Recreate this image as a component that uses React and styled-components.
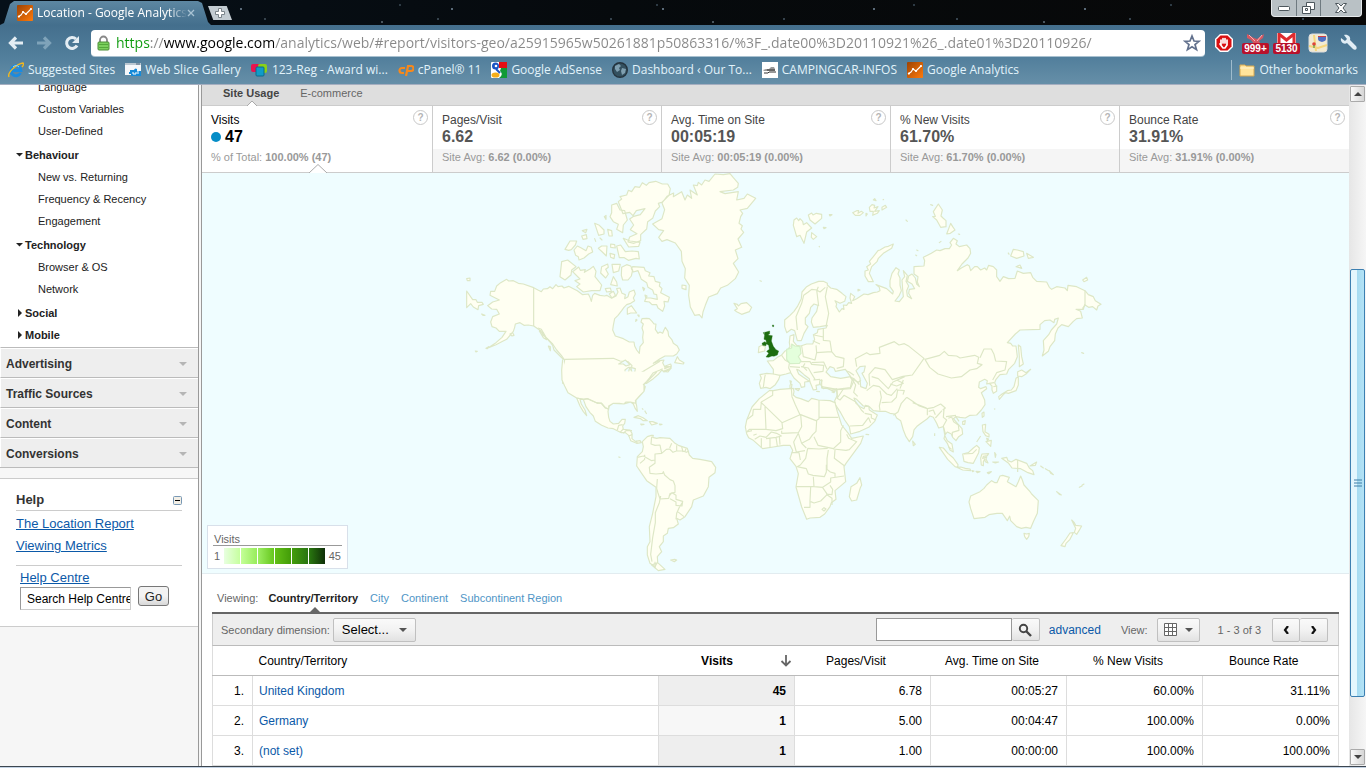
import React from 'react'
import styled, { createGlobalStyle, css } from 'styled-components'

const GlobalStyle = createGlobalStyle`
  * {
    box-sizing: border-box;
  }
  body {
    margin: 0;
    font-family: 'Liberation Sans', Arial, sans-serif;
    font-size: 12px;
    color: #222;
    background: #fff;
  }
  button, input, select {
    font-family: inherit;
    margin: 0;
  }
`

const chromeFont = css`
  font-family: 'Open Sans', 'Noto Sans', sans-serif;
`

const Window = styled.div`
  display: flex;
  flex-direction: column;
  height: 100vh;
  overflow: hidden;
`

/* browser chrome */

const TabStrip = styled.div`
  ${chromeFont}
  flex: 0 0 25px;
  display: flex;
  align-items: flex-start;
  background-color: #04070b;
  background-image:
    radial-gradient(circle at 30px 9px, #5a6a78 0 1px, transparent 1px),
    radial-gradient(circle at 92px 19px, #35424c 0 1px, transparent 1px),
    radial-gradient(circle at 143px 5px, #2d3a44 0 1px, transparent 1px),
    radial-gradient(circle at 51px 22px, #49545d 0 1px, transparent 1px),
    linear-gradient(90deg, #061019, #060a0d 45%, #080808);
  background-size: 211px 25px, 173px 25px, 257px 25px, 331px 25px, auto;
`

const Tab = styled.div`
  display: flex;
  align-items: center;
  width: 211px;
  height: 24px;
  margin-top: 1px;
  padding: 0 16px 0 17px;
  background: linear-gradient(#5d87a2, #446f8d);
  clip-path: polygon(0 100%, 4px 92%, 10px 12%, 14px 0, 198px 0, 202px 8%, 208px 88%, 211px 100%);
`

const TabTitle = styled.span`
  flex: 1;
  margin-left: 4px;
  overflow: hidden;
  white-space: nowrap;
  font-size: 12px;
  line-height: 20px;
  color: #fff;
  mask-image: linear-gradient(90deg, #000 88%, transparent);
`

const IconButton = styled.button`
  display: flex;
  align-items: center;
  justify-content: center;
  padding: 0;
  border: 0;
  background: none;
  color: ${({ $color }) => $color || '#e4edf3'};
`

const NewTab = styled(IconButton)`
  width: 24px;
  height: 14px;
  margin-top: 6px;
  margin-left: -3px;
  background: #c3ccd2;
  clip-path: polygon(0 0, 78% 0, 100% 100%, 22% 100%);
`

const WindowControls = styled.div`
  display: flex;
  margin-left: auto;
  margin-right: 4px;
  height: 17px;
  border: 1px solid #e6eaec;
  border-top: 0;
  border-radius: 0 0 4px 4px;
  background: #b9c1c5;
`

const ControlButton = styled(IconButton)`
  width: ${({ $wide }) => ($wide ? 41 : 24)}px;
  color: #4d575d;

  & + & {
    border-left: 1px solid #6f7a80;
  }
`

const Toolbar = styled.div`
  ${chromeFont}
  flex: 0 0 33px;
  display: flex;
  align-items: center;
  gap: 12px;
  padding: 3px 8px 0 8px;
  background: linear-gradient(#446f8d, #527f9c);
`

const AddressBar = styled.div`
  flex: 1;
  display: flex;
  align-items: center;
  height: 26px;
  margin-left: -1px;
  padding: 0 4px 0 5px;
  border-radius: 4px;
  background: #fff;
  box-shadow: 0 1px 0 #a9c1d0;
`

const AddressInput = styled.input`
  ${chromeFont}
  flex: 1;
  min-width: 0;
  padding: 0;
  margin-left: 5px;
  border: 0;
  outline: 0;
  font-size: 14px;
  line-height: 22px;
  color: transparent;
  background: linear-gradient(90deg, #0c9a0c 0 34px, #888 34px 48px, #000 48px 158px, #888 158px);
  background-clip: text;
`

const Extensions = styled.div`
  display: flex;
  align-items: center;
  gap: 8px;
  margin-left: -3px;
`

const Badges = styled.div`
  display: flex;
  gap: 4px;
`

const Bookmarks = styled.nav`
  ${chromeFont}
  flex: 0 0 27px;
  display: flex;
  align-items: center;
  padding: 0 8px 2px;
  border-bottom: 1px solid #a5aec0;
  background: linear-gradient(#527f9c, #668fa8);
`

const Bookmark = styled.a`
  display: flex;
  align-items: center;
  gap: 4px;
  margin-right: 10px;
  font-size: 12px;
  line-height: 20px;
  white-space: nowrap;
  text-decoration: none;
  color: #e2f3fb;
`

const OtherBookmarks = styled(Bookmark)`
  margin-left: auto;
  margin-right: 0;
  padding-left: 7px;
  border-left: 1px solid #9fbccd;
`

/* page */

const Page = styled.div`
  flex: 1;
  min-height: 0;
  display: flex;
  overflow: hidden;
`

const StatusEdge = styled.div`
  flex: 0 0 2px;
  border-top: 1px solid #3c4650;
  background: #c4d3e4;
`

const Sidebar = styled.aside`
  flex: 0 0 202px;
  overflow: hidden;
  border-right: 4px double #999;
  background: #f6f6f6;
`

const SideNav = styled.ul`
  margin: -9px 0 0;
  padding: 0 0 1px;
  list-style: none;
  background: #fff;
`

const SideItem = styled.li`
  padding-left: ${({ $group }) => ($group ? 16 : 38)}px;
  margin-top: ${({ $spaced }) => ($spaced ? 2 : 0)}px;
  font-size: 11px;
  line-height: 22px;
  font-weight: ${({ $group }) => ($group ? 'bold' : 'normal')};

  a {
    display: flex;
    align-items: center;
    gap: 2px;
    color: #222;
    text-decoration: none;
  }
`

const Accordion = styled.button`
  display: flex;
  justify-content: space-between;
  align-items: center;
  width: 100%;
  height: 30px;
  padding: 2px 11px 0 5px;
  border: 0;
  border-top: 1px solid #bbb;
  border-left: 1px solid #fff;
  background: #eee;
  box-shadow: inset 0 1px 0 #fff;
  font-size: 12px;
  font-weight: bold;
  color: #333;
`

const AccordionEnd = styled.div`
  height: 11px;
  border-top: 1px solid #bbb;
  background: #f7f7f7;
`

const Help = styled.section`
  padding: 11px 16px 16px;
  border-top: 1px solid #ccc;
  border-bottom: 1px solid #ccc;
  background: #fff;
`

const HelpTitle = styled.div`
  display: flex;
  justify-content: space-between;
  align-items: center;
  border-bottom: 1px solid #ccc;

  h2 {
    margin: 0;
    font-size: 13px;
    line-height: 20px;
    color: #333;
  }
`

const HelpLinks = styled.div`
  display: flex;
  flex-direction: column;
  align-items: flex-start;
  padding: 2px 0 8px;
  border-bottom: 1px solid #ccc;
`

const TextLink = styled.a`
  font-size: 13px;
  line-height: ${({ $tall }) => ($tall ? 22 : 16)}px;
  color: #0b59a8;
`

const HelpSearch = styled.form`
  padding: 4px 0 0 4px;
  white-space: nowrap;

  > div {
    display: flex;
    gap: 7px;
  }

  input {
    width: 111px;
    height: 23px;
    margin-top: 1px;
    padding: 0 0 0 6px;
    border: 1px solid #ccc;
    border-top-color: #999;
    border-left-color: #999;
    font-size: 12px;
    color: #000;
  }

  button {
    width: 31px;
    height: 20px;
    padding: 0;
    border: 1px solid #777;
    border-radius: 3px;
    background: linear-gradient(#f3f3f3 50%, #d8d8d8);
    font-size: 13px;
    color: #222;
  }
`

const Main = styled.main`
  flex: 1;
  min-width: 0;
  background: #fff;
`

const ReportTabs = styled.div`
  display: flex;
  align-items: center;
  gap: 21px;
  height: 21px;
  padding: 0 21px 4px;
  border-bottom: 1px solid #ccc;
  background: #dedede;
`

const ReportTab = styled.a`
  position: relative;
  font-size: 11px;
  line-height: 16px;
  font-weight: ${({ $active }) => ($active ? 'bold' : 'normal')};
  color: ${({ $active }) => ($active ? '#444' : '#666')};
  text-decoration: none;

  svg {
    position: absolute;
    left: 24px;
    bottom: -5px;
  }
`

const Cards = styled.div`
  display: grid;
  grid-template-columns: 231fr repeat(4, 229fr);
`

const Card = styled.div`
  position: relative;
  height: 67px;
  padding: 6px 9px 0;
  border-right: 1px solid #ccc;
  border-bottom: 1px solid #ccc;
  color: ${({ $active }) => ($active ? '#000' : '#444')};
  background: ${({ $active }) =>
    $active ? '#fff' : 'linear-gradient(#fff 0 43px, #f5f5f5 43px)'};

  &:last-child {
    border-right: 0;
  }
`

const CardName = styled.div`
  display: flex;
  justify-content: space-between;
  font-size: 12px;
  line-height: 16px;
`

const CardValue = styled.div`
  display: flex;
  align-items: center;
  gap: 4px;
  font-size: 16px;
  line-height: 18px;
  font-weight: bold;
  color: ${({ $active }) => ($active ? '#000' : '#555')};
`

const CardNote = styled.div`
  margin-top: 3px;
  font-size: 11px;
  line-height: 16px;
  color: #999;
`

const Dot = styled.span`
  width: 10px;
  height: 10px;
  border-radius: 50%;
  background: #058dc7;
`

const HelpMark = styled.button`
  width: 15px;
  height: 15px;
  padding: 0;
  margin: -2px -5px 0 0;
  border: 1px solid #c8c8c8;
  border-radius: 50%;
  background: #fff;
  font-size: 10px;
  line-height: 13px;
  font-weight: bold;
  color: #b5b5b5;
`

const CardNotch = styled.svg`
  position: absolute;
  left: 50%;
  bottom: -1px;
  margin-left: -8px;
`

const MapPanel = styled.section`
  position: relative;
  height: 401px;
  border-bottom: 1px solid #e2ecf0;
  background: #effdff;

  > svg {
    display: block;
    width: 100%;
    height: 400px;
  }
`

const Legend = styled.div`
  position: absolute;
  left: 5px;
  bottom: 4px;
  width: 141px;
  padding: 5px 5px 4px;
  border: 1px solid #d8e0ea;
  background: #fff;
  font-size: 11px;
  color: #666;

  h3 {
    margin: 0;
    padding: 2px 1px 0;
    font-size: 11px;
    font-weight: normal;
    line-height: 12px;
    border-bottom: 1px solid #999;
  }

  > div {
    display: flex;
    justify-content: space-between;
    align-items: center;
    margin-top: 2px;
    padding: 0 1px;
  }
`

const Scale = styled.div`
  display: flex;
  gap: 1px;
`

const Swatch = styled.span`
  width: 16px;
  height: 16px;
  background: linear-gradient(90deg, ${({ $from }) => $from}, ${({ $to }) => $to});
`

const Report = styled.section`
  padding: 0 10px;
`

const Viewing = styled.div`
  display: flex;
  align-items: center;
  gap: 12px;
  height: 40px;
  padding: 10px 5px 0;
  border-bottom: 2px solid #666;
  font-size: 11px;
  color: #666;

  > span {
    margin-right: -2px;
  }
`

const ViewingLink = styled.a`
  position: relative;
  line-height: 16px;
  text-decoration: none;
  font-weight: ${({ $active }) => ($active ? 'bold' : 'normal')};
  color: ${({ $active }) => ($active ? '#222' : '#4f95c6')};
  white-space: nowrap;

  svg {
    position: absolute;
    left: 50%;
    bottom: -7px;
    margin-left: -4px;
  }
`

const Filters = styled.div`
  display: flex;
  align-items: center;
  height: 32px;
  padding: 0 10px 0 8px;
  border: 1px solid #ccc;
  border-top: 0;
  border-bottom-color: #bbb;
  background: #eee;
  font-size: 11px;
  color: #666;
  white-space: nowrap;
`

const raised = css`
  height: 24px;
  border: 1px solid #c0c0c0;
  border-radius: 2px;
  background: linear-gradient(#fafafa, #f2f2f2 50%, #e2e2e2);
`

const SelectBox = styled.span`
  display: flex;
  align-items: center;
  margin-left: 3px;

  select {
    ${raised}
    appearance: none;
    width: 83px;
    padding: 0 8px;
    font-size: 13px;
    color: #000;
  }

  svg {
    margin-left: -17px;
    pointer-events: none;
  }
`

const TableSearch = styled.form`
  display: flex;
  margin-left: auto;

  input {
    width: 136px;
    height: 23px;
    padding: 0 4px;
    border: 1px solid #999;
    font-size: 12px;
  }

  button {
    ${raised}
    height: 23px;
    display: flex;
    align-items: center;
    justify-content: center;
    width: 28px;
    padding: 0;
    border-left: 0;
  }
`

const Advanced = styled.a`
  margin: 0 20px 0 9px;
  font-size: 12px;
  color: #0b59a8;
  text-decoration: none;
`

const ViewButton = styled.button`
  ${raised}
  display: flex;
  align-items: center;
  justify-content: center;
  gap: 8px;
  width: 43px;
  padding: 0;
  margin: 0 18px 0 9px;
`

const Pager = styled.div`
  display: flex;
  margin-left: 11px;

  button {
    ${raised}
    display: flex;
    align-items: center;
    justify-content: center;
    width: 28px;
    padding: 0;
  }

  button + button {
    border-left: 0;
  }
`

const Table = styled.table`
  width: 100%;
  table-layout: fixed;
  border-collapse: collapse;
  border-right: 1px solid #ddd;
  font-size: 12px;
  color: #000;

  th, td {
    height: 30px;
    padding: 2px 8px 0 6px;
    border-left: 1px solid #ddd;
    border-bottom: 1px solid #ddd;
    text-align: right;
    font-weight: normal;
  }

  th {
    height: 29px;
    padding: 1px 13px 0 0;
    border-left: 0;
    border-bottom-color: #bbb;
    text-align: center;
  }

  th:first-child {
    border-left: 1px solid #ddd;
  }
`

const NameHead = styled.th`
  && {
    padding-left: 6px;
    text-align: left;
  }
`

const SortedHead = styled.th`
  && {
    padding-right: 3px;
    font-weight: bold;
  }

  > span {
    display: flex;
    align-items: center;
    justify-content: center;
    gap: 4px;
  }

  > span > span {
    flex: 1;
  }
`

const NameCell = styled.td`
  && {
    text-align: left;
  }

  a {
    color: #0b59a8;
    text-decoration: none;
  }
`

const SortedCell = styled.td`
  && {
    font-weight: bold;
    background: ${({ $odd }) => ($odd ? '#eee' : '#f7f7f7')};
  }
`

const Scrollbar = styled.div`
  flex: 0 0 17px;
  display: flex;
  flex-direction: column;
  align-items: stretch;
  padding: 1px 1px;
  background: linear-gradient(90deg, #e6e6e6, #f6f6f6);
`

const ScrollButton = styled(IconButton)`
  height: 16px;
  border: 1px solid #aaa;
  border-radius: 1px;
  background: linear-gradient(90deg, #fafafa, #d6d6d6);
  color: #444;
`

const Track = styled.div`
  flex: ${({ $grow }) => $grow} 0 0;
`

const Thumb = styled.div`
  flex: 427 0 0;
  display: flex;
  align-items: center;
  justify-content: center;
  border: 1px solid #3c7fb1;
  border-radius: 2px;
  background: linear-gradient(90deg, #e3f6fd 0 45%, #a6dbf1 50%, #b4e3f6);
`

/* icons */

const Caret = ({ color = '#555', size = 8 }) => (
  <svg width={size} height={size / 2} viewBox="0 0 8 4">
    <path d="M0 0h8L4 4z" fill={color} />
  </svg>
)

const CaretRight = () => (
  <svg width="7" height="8" viewBox="0 0 7 8">
    <path d="M2 0l4 4-4 4z" fill="#222" />
  </svg>
)

const AnalyticsIcon = () => (
  <svg width="16" height="16" viewBox="0 0 16 16">
    <defs>
      <linearGradient id="ga" x2="1" y2="1">
        <stop stopColor="#9c4304" />
        <stop offset="1" stopColor="#ff7a0a" />
      </linearGradient>
    </defs>
    <rect width="16" height="16" rx="1" fill="url(#ga)" />
    <path d="M1 12l3-2 2-3 3 2 2-2 3-3" fill="none" stroke="#fff" strokeWidth="1.1" />
    <g fill="#fff">
      <circle cx="2" cy="11.500" r="1.1" />
      <circle cx="6" cy="7" r="1.1" />
      <circle cx="9" cy="9" r="1.1" />
      <circle cx="14" cy="4" r="1.1" />
    </g>
  </svg>
)

const IeIcon = () => (
  <svg width="16" height="16" viewBox="0 0 16 16">
    <path d="M12.500 11A5 5 0 1 1 13 8.500H4" fill="none" stroke="#1b8be0" strokeWidth="2.800" />
    <path d="M1 15C-1 11 8 2 15 1c1 1 0 3-1 4" fill="none" stroke="#f2b81d" strokeWidth="1.400" />
    <path d="M5 5a4 4 0 0 1 6 0" fill="none" stroke="#8ed5ff" strokeWidth="1" />
  </svg>
)

const SliceIcon = () => (
  <svg width="16" height="14" viewBox="0 0 16 14">
    <rect width="16" height="12" fill="#f5f8fb" />
    <path d="M0 1h16" stroke="#bac7d1" strokeWidth="2" />
    <path d="M11 1h4" stroke="#46637c" strokeWidth="1" />
    <path d="M5 7h4a2 2 0 0 1 3-1v2h4v5H6v-2H4V9h1z" fill="#168ad8" />
    <path d="M8 9v2h3V9M13 8v3" fill="none" stroke="#fff" />
  </svg>
)

const RegIcon = () => (
  <svg width="17" height="14" viewBox="0 0 17 14">
    <rect x="0" y="1" width="9" height="8" rx="2" fill="#e9134e" />
    <rect x="7" y="1" width="9" height="9" rx="2" fill="#8bd018" />
    <rect x="5" y="4" width="8" height="9" rx="1" fill="#109cc9" stroke="#0a6a8c" />
  </svg>
)

const CpIcon = () => (
  <svg width="16" height="14" viewBox="0 0 16 14">
    <path
      d="M7 5H4a2 2 0 0 0 0 5h2M8 13l2-10h3a2 2 0 0 1 0 5h-3"
      fill="none"
      stroke="#f7891c"
      strokeWidth="2.200"
    />
  </svg>
)

const AdSenseIcon = () => (
  <svg width="16" height="16" viewBox="0 0 16 16">
    <rect width="16" height="16" rx="1" fill="#fff" />
    <path d="M8 0h8v6H8z" fill="#e60f14" />
    <path d="M10 6h6v10H8c4-3 3-5 1-7z" fill="#109a35" />
    <circle cx="4.500" cy="4" r="3.500" fill="#1b55c4" />
    <circle cx="5" cy="4" r="1.300" fill="#fff" />
    <ellipse cx="4.500" cy="13" rx="4" ry="2.600" fill="#f5ae19" />
    <path d="M5 7l4 4" stroke="#1b55c4" strokeWidth="2" />
  </svg>
)

const GlobeIcon = () => (
  <svg width="16" height="16" viewBox="0 0 16 16">
    <circle cx="8" cy="8" r="7.300" fill="#33505f" stroke="#25343e" strokeWidth="1.400" />
    <path d="M3 4l4-2 2 2-2 2 1 2-3 2-2-3zM10 6l4 1-1 4-3 2-1-4z" fill="#7f9fb0" />
  </svg>
)

const CampIcon = () => (
  <svg width="16" height="16" viewBox="0 0 16 16">
    <rect width="16" height="16" fill="#fff" />
    <path d="M1 8l3-1h3l2-2h3l1 2v2H2z" fill="#999" />
    <path d="M5 8h8M2 11h4l1-1h7" fill="none" stroke="#333" />
  </svg>
)

const FolderIcon = () => (
  <svg width="16" height="14" viewBox="0 0 16 14">
    <path d="M1 2h5l1 1h8v10H1z" fill="#ffe49b" stroke="#d6a850" />
    <path d="M1 5h14" stroke="#fff4cf" />
  </svg>
)

const BackIcon = ({ flip }) => (
  <svg width="16" height="14" viewBox="0 0 16 14">
    <path
      d={flip ? 'M1 7h12M8 1.500L13.500 7 8 12.500' : 'M15 7H3M8 1.500L2.500 7 8 12.500'}
      fill="none"
      stroke="currentColor"
      strokeWidth="3.200"
    />
  </svg>
)

const ReloadIcon = () => (
  <svg width="16" height="16" viewBox="0 0 16 16">
    <path d="M13 10.500A5.500 5.500 0 1 1 12 4" fill="none" stroke="currentColor" strokeWidth="3" />
    <path d="M15 1v7H8z" fill="currentColor" />
  </svg>
)

const LockIcon = () => (
  <svg width="15" height="16" viewBox="0 0 15 16">
    <path d="M4 8V5a3.500 3.500 0 0 1 7 0v3" fill="none" stroke="#888" strokeWidth="1.800" />
    <rect x="2" y="7" width="11" height="8" rx="1" fill="#7bd05d" stroke="#4b8d36" />
    <path d="M3 9.500h9M3 12.500h9" stroke="#54a83b" />
  </svg>
)

const StarIcon = () => (
  <svg width="18" height="18" viewBox="0 0 18 18">
    <path
      d="M9 2l2 5 5 .3-4 3.300 1.500 5L9 12.800 4.500 15.600l1.500-5-4-3.300L7 7z"
      fill="#fff"
      stroke="#62718d"
      strokeWidth="1.700"
    />
  </svg>
)

const StopHandIcon = () => (
  <svg width="20" height="20" viewBox="0 0 20 20">
    <path d="M6 1h8l5 5v8l-5 5H6l-5-5V6z" fill="#fff" />
    <path d="M6.500 2.500h7l4 4v7l-4 4h-7l-4-4v-7z" fill="#d90f12" />
    <path
      d="M7 7v5M9 5.500V10M11 5.500V10M13 7v5l-2 3H9l-3-4"
      fill="none"
      stroke="#fff"
      strokeWidth="1.700"
      strokeLinecap="round"
    />
  </svg>
)

const BadgeBox = styled.span`
  display: flex;
  flex-direction: column;
  align-items: center;
  width: 27px;

  b {
    align-self: stretch;
    margin-top: -1px;
    border-radius: 2px;
    background: #b8112b;
    font-family: 'Liberation Sans', Arial, sans-serif;
    font-size: 10px;
    line-height: 11px;
    text-align: center;
    color: #fff;
  }
`

const BirdIcon = () => (
  <svg width="20" height="11" viewBox="0 0 20 11">
    <path d="M1 1l7 4 3 1 7-5-1 4-4 3 2 3H8L5 7 1 5z" fill="#d75761" />
    <path d="M3 2l6 6M16 2l-5 6" stroke="#f7b0b5" />
  </svg>
)

const MailIcon = () => (
  <svg width="19" height="11" viewBox="0 0 19 11">
    <rect width="19" height="11" fill="#fff" />
    <path d="M2 11V1l7.500 6L17 1v10" fill="none" stroke="#df2b2e" strokeWidth="3" />
  </svg>
)

const MapsIcon = () => (
  <svg width="20" height="20" viewBox="0 0 20 20">
    <rect x="1" y="1" width="18" height="18" rx="3" fill="#f1ead2" stroke="#ddd" />
    <path d="M1 13l9 2 9-3M6 2l2 16" stroke="#f6d67c" strokeWidth="2" fill="none" />
    <path d="M10 3h8v3c0 2-2 2-4 3-2-1-4-1-4-3z" fill="#5271c4" />
    <path d="M10 3h8v1h-8z" fill="#cf3f44" />
    <circle cx="6" cy="11" r="1.800" fill="#e0443a" />
    <path d="M6 12v3" stroke="#3b8e3b" />
  </svg>
)

const WrenchIcon = () => (
  <svg width="18" height="18" viewBox="0 0 18 18">
    <path
      d="M1 4l4 3 2-2-3-4c4-1 7 2 6 5l6 6c2 3-1 5-3 3L7 9C4 11 0 8 1 4z"
      fill="#e1edf5"
    />
  </svg>
)

const SearchIcon = () => (
  <svg width="14" height="14" viewBox="0 0 14 14">
    <circle cx="5.500" cy="5.500" r="3.700" fill="none" stroke="#444" strokeWidth="1.900" />
    <path d="M8 8l5 5" stroke="#444" strokeWidth="2.400" />
  </svg>
)

const GridIcon = () => (
  <svg width="13" height="13" viewBox="0 0 13 13">
    <path
      d="M.5.500h12v12H.5zM4.500.500v12M8.500.500v12M.5 4.500h12M.5 8.500h12"
      fill="#fff"
      stroke="#666"
    />
  </svg>
)

const Chevron = ({ d }) => (
  <svg width="6" height="8" viewBox="0 0 6 8">
    <path d={d} fill="none" stroke="#111" strokeWidth="2.200" />
  </svg>
)

const SortArrow = () => (
  <svg width="12" height="12" viewBox="0 0 12 12">
    <path d="M6 0v10M1.500 6L6 10.500 10.500 6" fill="none" stroke="#666" strokeWidth="1.800" />
  </svg>
)

/* world map, drawn in four regions at three units per pixel */

const REGIONS = [
  {
    origin: [258, -3],
    land: `M140 328L146 333 160 332 175 340 190 342 221 353 234 360 244 365 250 357 262 356 270 350 278 356 288 344 294 350 306 348 312 354 326 349 340 356 352 362 368 374 385 372 390 382 394 394 398 376 404 370 420 376 434 378 440 376 455 385 468 378 474 366 470 356 480 354 486 370 496 374 494 386 504 380 508 366 522 360 526 372 520 384 524 392 512 400 500 404 492 412 485 422 474 436 464 446 460 466 458 480 466 498 490 506 508 516 522 516 524 528 530 540 538 550 540 530 550 518 548 502 550 486 546 474 550 462 543 456 546 446 560 445 568 446 576 454 582 462 588 462 586 478 594 490 600 486 608 490 612 480 616 472 624 484 626 498 636 510 640 520 652 528 658 540 650 552 640 558 615 558 600 566 580 580 600 572 612 570 608 578 614 590 634 590 626 600 612 606 606 600 596 612 580 626 560 640H308L308 600 314 570 304 556 290 540 278 522 262 506 250 496 242 482 230 474 221 468 205 465 192 466 180 458 166 462 164 472 160 484 150 496 140 508 128 514 108 524 84 534 108 518 126 502 138 484 118 484 108 474 96 470 92 456 98 440 118 432 110 418 95 417 83 407 98 396 118 390 106 384 90 376 92 364 104 364 110 348 122 338z
M640 80l25-15 10 25 7-15 13 10-5-25 22 15-12-30 12 2 3-10 10 8 10-15 12 4 18-22 25 2 20-3 10 12 15 17-2 12-13 8-40 5 15 6 40-6-5 25 22-5 10-13 25 13-25 30-22 5 8 10-6 10-5 20 10 7-4 10 8 10-17 20 11 25-19 8 8 26-14 14 16 26-10 20-24 20-20 8-10 17-26 10-10 25-7 20-3 18-8-10-14 2-13-25-5-35 2-30-14-22 2-28-10-22-2-30-18-25-25-10-15 5-10-12 15-20-15-3-18-17 28-16 8-27-8-20 15-20 20-10z
M822 400l10 3 3 5 8-7 17-3 15 14-7 13-23 8-15-8-6-4 8-5z
M475 95l10-8-5-7 20-5 5-14 10 4 10-15 14 2 8-14 12 8 8-8 20-4 20 8 16 0 8 14-4 20-20 20-12 4 4 10-13 13-8 22-15 10-3 22-18 17 0 18-20 8-18-4 5-15 22-10-20-12 10-14-12-18 12-8 20-5 14-18-26 6-10 15-10-10-20 4z
M455 105l15-5 10 20 14 2 8 28-12 15-2 23-18-10 5-15-15-8-10-15 5-12z
M470 228l12-3 14 20 20-2 19 2 3 22-10-2-23 6-12-8-15 0zM490 205l20 8 30 4-4 12-30 2z
M452 222l12 2 2 10-14-2zM450 250l14 4-2 12-10-4zM415 235l10-7 16 0-2 30-12-12zM443 178l12 4 2 16-10 0zM404 160l14 6 14 14 0 12-16 4zM365 198l14-4 2 12-12 2zM367 182l14-4-4 10zM433 140l5-4 0 12zM404 206l3 8zM420 204l6 6z
M315 238l15-25 20 0-4 12-12 14-8 2zM342 240l10-12 12 6 14 8 6-14 10 4 4 14-12 6-14 12-15 6-2-10-8-4z
M305 275l18-5 25 20-13 10-2 15-18 15-15-10z
M338 305l18-14 5 10 15-2-3 8 17-10 10-8 8 15-3 16 20 25-5 17-25 0-25 4-20-16 10-8-15-10 15-5z
M425 290l18-8 2 10-8 6 8 14-8 12-15-15zM456 283l25 0-5 20-16 5zM460 320l10 16 2 12-20-4zM436 356l15-2 3 10-14 2zM448 372l12-8 6 12-10 8z
M485 292l15-8 12 4 6 12-4 18-10 12-16 0-4-14zM518 290l34 2 4 10 14 6-4 10 16 2 4 14 14 4-2 10 8 8-4 12 26 14-4 14-12-2 2 14-6 16-14-10-4-10-14 0-8-8-14-2 4-10 14 0 20 4-2-14-8-2-4-12-14-8-4-14-16-10-6-16-4-10-14 4-6-10zM502 415l12-8 16 22-18 0-10 4zM533 435l4 0 0 5zM528 448l3 2-4 4zM548 352l6 4-3 6zM555 375l6 3-3 8z
M644 578l8-18 6 10 14 8-2 4zM616 588l16-6 2 6-20 8zM610 604l24-10-10 12zM666 345l12 2 0 12-12-4z
M20 363l18 26 10 0 4 8 14 0 4 6-14 4-2 12-14-8-8-10-12 12zM20 326l10-2 0 8-8 0zM65 432l10 4-6 0zM78 535l8-5-4 6zM46 543l6 1-4 2zM238 483l10 4 12 22-10-6zM265 528l6 2 0 12zM150 492l8-4 4 8-6 2z`,
    borders: `M221 353v115M234 474l10 4 14 24 12 14 8 10 4 14 24 24 9 6M315 568l145-3 20 8 24 2 12 12-4 14M540 610l60-36`,
    lakes: `M476 582l20-12 14 14-12 4-8-6zM495 618l0-18 10-8 4 0-6 26zM512 592l14 4-2 12-8 0zM520 624l18-10-4 10zM538 612l14-6-4 8z`,
  },
  {
    origin: [358, 207],
    open: true,
    land: `M8-62L5-30 6 0 14 18 24 38 50 54M50 54L60 78 70 95 80 107 75 90 64 72 60 58 70 58 78 80 90 98 100 108 106 124 125 136 144 144 160 146 172 152 184 158 196 158 206 166 212 182 230 190 244 188 240 182 226 184 216 176 216 160 210 150 190 148 188 138 194 130 196 118 186 118 176 130 160 132 150 124 146 112 144 94 148 78 160 70 178 70 192 72 198 66 212 66 220 72 226 86 232 94 230 78 226 62 240 46 252 34 256 20 250 14 260 4 268-6 280-22 300-30 308-34M5-30L6 0 14 18 24 38 50 54 72 58 84 56 110 68 124 70 136 84 146 88 146 78 160 70 192 72 212 66 228 70 228 60 252 34 252 14 266 0 290-24`,
    islands: `M247 185l15-15 12-4 6 0-2 6 12 3 10-2 30 2 15 15 10 6 27 9 6 20 10 10 22 3 20 4 15 3 12 17-2 16-18 14-2 28-15 28-30 12-5 20-20 30-15 10-10-5 5 17-15 11-15 2-3 15-12 8 0 17-12 15 7 15-13 15 1 15-8 15-15-10-8-25 0-25 8-15-2-45 10-40 10-50 0-28-28-20-15-22-15-22 2-28 15-15 3-15z
M293 548l22 20-20 4-20-17zM332 540l12-2 6 2-7 5zM222 112l13-5 14 6 13 9-12 0-8-6zM268 125l10 0 14 5-17 5zM298 132l8 1-6 2zM242 132l10 1-8 2zM246 85l4 4M254 92l6 10M176 231l4 1z`,
    borders: `M50 54l20 4 12-2 30 14 12-1 12 14 10 4M172 150l4-14 12-2M180 157l10-10M190 160l8-8 18 0M205 168l12-4M228 182l4 8M275 170l-2 22 12 4 15-1 5 25-20 2 0 18-10 2-25-14-18 4M240 250l14-12 0-14M285 240l0 10-17 12 2 18 18 2 20-2 2-5 4 10 16 14 10 4 5 14 0 20-15 4-4 14-26 2-6-18-4-14 2-28M326 350l10-12 12 8 0 12 20 6-2 14-18-2 0-10-18-10M352 394l20 16M368 366l-10 16-8 18-2 18M302 348l-4 20-12 30 0 30-8 45-6 50 4 22M305 220l14-12 10-1 10 10 10-4 20 0 10 4 8-4M335 190l-6 14M350 196l0 18M365 200l4 16M378 206l-4 10M285 545v20`,
  },
  {
    origin: [538, -3],
    land: `M262 345L272 354 290 358 306 370 318 380 314 394 300 400 285 392 290 402 288 410 298 426 306 416 312 418 310 405 320 406 326 398 335 400 330 384 332 370 344 380 338 392 350 386 372 372 384 374 400 368 412 366 420 362 418 352 408 344 424 350 440 356 458 372 460 364 450 350 450 332 456 310 468 293 478 300 474 312 480 324 480 345 484 362 478 376 465 393 478 395 490 380 488 358 486 330 494 320 490 302 502 316 498 334 506 348 500 362 502 378 515 386 506 370 508 358 524 356 516 342 502 334 506 318 516 312 526 324 530 342 538 350 532 336 534 320 522 312 522 290 552 288 554 272 550 262 574 250 590 240 600 242 615 236 628 236 635 225 630 218 640 205 652 212 648 222 658 230 680 225 690 236 692 250 684 264 666 282 652 302 664 294 682 284 688 288 692 302 704 290 712 290 722 300 734 294 740 300 746 286 760 290 770 300 770 320 780 334 790 320 806 326 825 325 832 303 850 310 872 308 878 322 890 334 920 336 928 352 935 358 950 350 975 354 982 362 984 346 1010 350 1035 362 1045 374 1060 380 1066 392 1083 403 1074 408 1070 420 1058 410 1046 412 1034 404 1030 418 1008 418 1022 424 1027 444 1010 446 1000 454 985 470 965 464 954 474 946 492 944 512 930 530 925 544 907 558 912 540 910 512 926 494 934 480 950 462 955 444 944 448 942 458 930 450 914 452 900 464 900 478 840 480 826 492 802 518 812 520 818 528 828 528 832 560 824 580 806 598 800 612 780 614 768 628 764 638 770 650 770 664 760 670 756 660 756 648 748 640 740 642 742 632 734 628 718 636 716 652 722 656 738 650 740 656 724 668 734 690 735 704 724 720 710 735 690 736 676 744 660 742 648 740 640 746 652 760 666 776 668 792 656 800 648 812 638 802 634 792 622 786 614 796 622 812 636 822 640 846 630 840 622 820 612 806 616 790 610 770 596 774 590 760 580 742 570 738 560 748 545 758 532 768 522 780 518 800 508 815 498 800 490 780 482 752 470 744 464 732 450 730 436 724 420 724 400 722 388 710 370 708 350 688 342 684 348 700 360 710 372 716 376 706 386 708 388 720 412 735 404 754 386 772 360 784 332 792 328 770 314 750 302 728 286 704 284 692 292 676 290 656 276 662 260 654 250 656 242 644 246 632 240 630 238 644 228 646 230 658 220 660 210 636 208 626 192 614 176 600 170 598 176 612 190 622 208 634 194 636 194 650 184 652 180 640 162 624 152 608 138 612 120 616 116 628 106 644 90 656 78 652 62 655 58 640 64 624 60 614 80 610 100 612 100 598 82 573 100 572 112 562 124 556 134 544 142 540 150 530 148 518 150 498 162 494 160 514 170 526 182 528 200 522 218 522 224 508 220 494 232 488 234 478 258 474 262 466 240 470 220 472 214 456 216 444 230 424 234 406 222 402 212 412 208 430 196 444 196 462 204 470 192 490 184 512 172 512 164 482 154 478 140 488 134 470 134 450 150 436 162 424 172 410 184 386 186 366 200 350 214 342 236 334 250 334 262 340z
M57 530l9-4 10 4-2 13-19 5z
M162 150l8-6 6 8 4-6 8 8 2 10 10-6 15 16-15 12-8 34-12-24-10 4-7-24-3-10z
M205 135l10-6 4 6 10-5 16 3 0 12-20 17-15-12zM215 188l15 12-10 8-6-6zM268 134l8 0-6 4zM250 172l8 1-6 3zM237 228l2 4M338 128l12-6 6 0-2 8 10-6 6 4-10 8-14 0zM388 112l8-8 8 2-2 8 12-4-10 14 14-2-6 8-14 6 2-12-10 0zM400 90l4-4 4 6zM426 112l10-6 4 6-14 8zM428 90l4-2M378 130l4 2-4 6zM498 150l4 4zM572 104l6 2z
M460 222l-5 13-25 15-15 15-4 10-16 15-7 20 12 25-15 0-10-17 0-15 10-3-5-10 12-8-4-8 12-14 14-18 6-2 15-9 10-2z
M580 125l15-23 12 18-4 18 6 6 9 8 0 18-16 2-12-22-12-10 8-1zM620 192l12-32 6 10 7 10-14 10zM598 218l5-4zM655 192l4 1zM530 240l4 2zM527 255l3 2zM354 358l6 2-6 3z
M812 258l8-20 12 2 18 5 2 13-22 7zM860 250l20 12-15 3zM828 290l12-5 5 10zM804 248l4 6M1028 330l12-8 3 8-11 5zM1025 548l6 2z
M835 525l7 5 3 30 5 22-12 8 0-30zM833 605l12-5 13 8 14-10-14 14-13 8-12-2zM60 332l4 2zM150 632l4 2-2 8zM150 645l6-2-2 12-4 0zM165 656l14 0-4 6z`,
    borders: `M172 480l-4-40 17-40 6-24 14-10 10-8 16 2 4-10M236 408l-6-48 10 6 16-14M262 350l-6 30 10 50-8 40M222 495l28 6M218 512l22 10M250 475l0 36 20 2 5 32M185 528l5 32 35 10 5-22-2-22M230 548l45-3 12 14 25 6-2 25-20 5M215 578l36-2 10 22M180 575l30 0 5 8 36 3-2 18-28 4M183 590l22 4 8 14 12 20M195 580l-6 10 12 12M125 556l10 14 14 8M148 580l-2 14 6 12M150 590l30 2M76 614l-2 8-4 30M100 612l20 4M245 628l0 26 46 5 40-3 10-22-10-12M220 630l20-2M312 600l16 6 14 10M330 620l12 6 16 18M350 590l-4-24 34-18 10 6 30-4-2-18 45-17 14 10 16-4 14 8 45 36-35 50-28 4-32 10-22-30-30-6-18 20 2 34M395 620l20 6 30 30 14-20 35-16M480 656l10-26M555 568l44-12 14-12 12 12 25 2 10 6 44-8 12 6-4 18 14 4-16 12-20 4-26 20-30 4-40-12-25-20zM720 563l12-26 22 0 8 16 5 20 33 2-5 25-25 8-12 22M1035 362v44l-8 10`,
    lakes: `M258 606l12-16 12 4 4 10 30-6 16 22-30 5-30-5zM348 602l12-12 16-2-4 18-6 4 16 30-4 16-16-6-2-26z`,
    germany: 'M140 538l15-4 0-12 10 6 15 2 3 20-8 10 8 13-5 7-28 1-10-13z',
    uk: 'M75 487l14-4 0 8-5 4 13 2-3 16 6 16 8 10 8 4-4 12-10 4-6-1-10 4-8-1 8-11-6-6 8-6-2-12-6-4-2-12-6-2zM66 520l8-5 6 4-2 8-10-1zM97 465l4 0 0 5-3 0zM70 488l3-2 0 8z',
  },
  {
    origin: [538, 197],
    land: `M88 62l12 0 20-4 40-3 2 10-2 10 8 7 14 4 23 9 10-10 20 5 35 2 15 6 7 27 13 40 20 25 10 15 35-7-8 22-22 30-22 30-6 10 5 45-14 12-18 15 3 26-14 10-4 12-16 22-14 10-30 2-10 4-15-37-17-60 7-40-7-22-18-23 8-25-8-15-20 0-30 5-32 5-28-25-14-8-6-12-4-20 4-20 16-40 22-25z
M360 323l5 22-4 8-11 37-15 3-7-13 5-30 17-10z
M692 378l28-13 12-10 8-10 15-13 10 6 6 0 9-20 8-2 20 6-6 13 26 15 7-15 7-17 5 12 5 15 18 20 5 7 20 20-3 38-12 25-8 20-14-3-14 3-14-5-18-18-3-14-7 14-15-22-16 0-24 4-12 8-33 4-10-30-5-20z
M852 490l8 2 8-2-2 10-6 8-6-8zM995 450l8 8 4 8 18 2-8 14-7 11-7-6 4-12zM1000 488l-10 20-12 12-3 10-12-3 15-20 12-18z
M598 232l12 2 14 16 16 14 14 20-1 8-8-2-22-22-14-20zM650 292l12-1 14 4 14 2 2 5-24-2zM668 252l17-4 15-14 10-8 8 8-2 14-6 12-10 20-16-2-12-4zM722 264l4-12 20-1-4 6-12 2-2 6 12-4-2 6 6 12-8-4-2-8-4 8 0 12-6-2zM696 302l6 1-4 2zM708 304l12 1-8 3zM742 308l12-3-8 6zM764 248l4 6-2 8zM758 276l18 0-10 3zM785 265l15-3 4 10 10 4 14-8 32 12 8 14 10 8 4 12-18-6-22-12-26-2-10-14zM870 288l16-10 4-2-4 10zM902 288l8 6zM916 296l10 6zM928 302l12 12-8-4zM950 365l14 10-6-2zM1018 352l8-4zM1026 346l6-4z
M727 165l10-2-2 22 12 8 0 8-10-4-8-12zM738 215l16-4-2 18-6-6zM722 198l-12 18M740 205l6 2-4 4zM518 213l8 10-6 4zM726 130l6-4 0 12-5 4zM668 155l8-3-2 11-6 0zM828 25l7-5 0 25-7 17-23 8-8-2-7 6-12 14-2-8 10-8 16-10 12-2 8-10zM762 118l4-2M584 190l0 8M378 193l8 1zM276 66l10-4-4 6zM230 64l8 1z`,
    borders: `M98 62l0 14-34 20-2 22-22 0-2 18-16 12M62 96l64 62 54-24-14-30-10-24-2-24M75 110l3 68-50 0-8 8M78 178l30 4 20-6-2-18M125 182l0 8 50-2 10-18-3-36 46 18 9-6 0-56M237 142h58M230 152l-2 32-10 10-10 14-23 12-10-30M222 200l12 26 46 10 22-20 0-34 8-16M280 237l38 4 10-2 22-24-24-10-6-12M285 240l-2 25 30 22M265 240l-4 26 0 32 10 8 14 4 0 10M203 235l34 2 26-2M203 235l-6 30-16 20-10 5 28 6 6 16 14 4 34 4 6-14 0-22M220 320l2 30-54 0M222 350l26 2 24-16 0-12 40-6M212 352l-2 40 0 20-18 0M212 395l10 4 20-6 20-20-14-20M258 372l18 2 2-16-8-12M262 375l14 10 0 20M246 418l6-5 6 4-6 6zM185 220l14 14M175 190l-14 26 8 30 26-4M155 248l22 0 4 22M64 205l0 28M90 205l0 26M108 202l4 26M118 198l2 26M44 208l16-10 18 4 16-16 16 4 14 8-16 4-30 4M20 186l16-4M40 196l10-4M245 50l46 8 40-5 6-26 18 10 8-6M290 58l2 26 20-30M290 84l10 6 12-14 36 20 16 24 8 8M335 25l12 20-6 22 12 12M380 62l20-16 18 4 22 22 14 4 18-20M420 122l-2-14 6-26-4-20M425 98l30-2 14-14 4-22 20 2-4 12M500 82l-16 18-10 26-14 10M500 82l18 12 20 14 24 8 20-4 20-10 14 12-8 6M518 98l42 16M562 116l0 20M566 124l14-4 6 14M606 122l-20 22M612 118l-2 24 10 8-10 18 4 26M625 145l10-4 6 14 14 10 2 16-20 6 0 12M618 140l30-4M645 136l12 18M330 168l38-2 18-24M374 130l20 4 0 10 14 6M386 144l6 14M625 230l10 8M672 252l26-2 12-12M833 270v36M470 30l20 10-20 8-20-6M748 40l14-2M760 50l12-2`,
  },
]

const WorldMap = () => (
  <svg viewBox="0 0 1147 400" role="img" aria-label="Visits by country">
    {REGIONS.map(({ origin, land, islands, borders, lakes, germany, uk }) => (
      <g
        key={origin.join()}
        transform={`translate(${origin.join(' ')}) scale(0.33333)`}
        stroke="#dde7c6"
        strokeWidth="3.500"
        strokeLinejoin="round"
      >
        <path d={land} fill="#fffff2" />
        {islands && <path d={islands} fill="#fffff2" />}
        <path d={borders} fill="none" />
        {lakes && <path d={lakes} fill="#effdff" />}
        {germany && <path d={germany} fill="#e4ffdc" stroke="#d5efc8" />}
        {uk && <path d={uk} fill="#1d6d10" stroke="#1d6d10" strokeWidth="1" />}
      </g>
    ))}
  </svg>
)

/* data */

const BOOKMARKS = [
  [IeIcon, 'Suggested Sites'],
  [SliceIcon, 'Web Slice Gallery'],
  [RegIcon, '123-Reg - Award wi...'],
  [CpIcon, 'cPanel® 11'],
  [AdSenseIcon, 'Google AdSense'],
  [GlobeIcon, 'Dashboard ‹ Our To...'],
  [CampIcon, 'CAMPINGCAR-INFOS'],
  [AnalyticsIcon, 'Google Analytics'],
]

const NAV = [
  { label: 'Language' },
  { label: 'Custom Variables' },
  { label: 'User-Defined' },
  { label: 'Behaviour', group: true, open: true, spaced: true },
  { label: 'New vs. Returning' },
  { label: 'Frequency & Recency' },
  { label: 'Engagement' },
  { label: 'Technology', group: true, open: true, spaced: true },
  { label: 'Browser & OS' },
  { label: 'Network' },
  { label: 'Social', group: true, spaced: true },
  { label: 'Mobile', group: true },
]

const METRICS = [
  { name: 'Visits', value: '47', note: '% of Total: ', bold: '100.00% (47)', active: true },
  { name: 'Pages/Visit', value: '6.62', note: 'Site Avg: ', bold: '6.62 (0.00%)' },
  { name: 'Avg. Time on Site', value: '00:05:19', note: 'Site Avg: ', bold: '00:05:19 (0.00%)' },
  { name: '% New Visits', value: '61.70%', note: 'Site Avg: ', bold: '61.70% (0.00%)' },
  { name: 'Bounce Rate', value: '31.91%', note: 'Site Avg: ', bold: '31.91% (0.00%)' },
]

const SCALE = [
  ['#e8ffe0', '#c6ff9f'],
  ['#c4ff98', '#98ec5c'],
  ['#9cee62', '#66c71d'],
  ['#62bf17', '#429c08'],
  ['#439d0c', '#297512'],
  ['#29780f', '#0f2f08'],
]

const ROWS = [
  ['United Kingdom', '45', '6.78', '00:05:27', '60.00%', '31.11%'],
  ['Germany', '1', '5.00', '00:04:47', '100.00%', '0.00%'],
  ['(not set)', '1', '1.00', '00:00:00', '100.00%', '100.00%'],
]

const URL_TEXT =
  'https://www.google.com/analytics/web/#report/visitors-geo/a25915965w50261881p50863316/%3F_.date00%3D20110921%26_.date01%3D20110926/'

const BrowserChrome = () => (
  <>
    <TabStrip>
      <Tab>
        <AnalyticsIcon />
        <TabTitle>Location - Google Analytics</TabTitle>
        <IconButton $color="#a9c3d4" aria-label="Close tab">
          <svg width="8" height="8" viewBox="0 0 8 8">
            <path d="M1 1l6 6M7 1L1 7" stroke="currentColor" strokeWidth="1.300" />
          </svg>
        </IconButton>
      </Tab>
      <NewTab aria-label="New tab">
        <svg width="10" height="10" viewBox="0 0 10 10">
          <path d="M3.500.500h3v3h3v3h-3v3h-3v-3h-3v-3h3z" fill="#fff" stroke="#7b858b" />
        </svg>
      </NewTab>
      <WindowControls>
        <ControlButton aria-label="Minimize">
          <svg width="12" height="5" viewBox="0 0 12 5">
            <rect x=".5" y=".5" width="11" height="4" rx="1" fill="#fff" stroke="currentColor" />
          </svg>
        </ControlButton>
        <ControlButton aria-label="Restore">
          <svg width="13" height="12" viewBox="0 0 13 12">
            <path d="M4.500.500h8v7h-8z" fill="#fff" stroke="currentColor" />
            <path d="M.5 4.500h8v7h-8zM3.500 6.500h2v2h-2z" fill="#fff" stroke="currentColor" />
          </svg>
        </ControlButton>
        <ControlButton $wide aria-label="Close">
          <svg width="12" height="10" viewBox="0 0 12 10">
            <path
              d="M.5.500h3L6 3 8.500.500h3L8 5l3.500 4.500h-3L6 7 3.500 9.500h-3L4 5z"
              fill="#fff"
              stroke="currentColor"
            />
          </svg>
        </ControlButton>
      </WindowControls>
    </TabStrip>
    <Toolbar>
      <IconButton aria-label="Back">
        <BackIcon />
      </IconButton>
      <IconButton $color="#7fa3b9" aria-label="Forward">
        <BackIcon flip />
      </IconButton>
      <IconButton aria-label="Reload">
        <ReloadIcon />
      </IconButton>
      <AddressBar>
        <LockIcon />
        <AddressInput aria-label="Address" defaultValue={URL_TEXT} />
        <IconButton aria-label="Bookmark this page">
          <StarIcon />
        </IconButton>
      </AddressBar>
      <Extensions>
        <IconButton aria-label="Ad blocker">
          <StopHandIcon />
        </IconButton>
        <Badges>
          <BadgeBox>
            <BirdIcon />
            <b>999+</b>
          </BadgeBox>
          <BadgeBox>
            <MailIcon />
            <b>5130</b>
          </BadgeBox>
        </Badges>
        <IconButton aria-label="Maps">
          <MapsIcon />
        </IconButton>
      </Extensions>
      <IconButton aria-label="Settings">
        <WrenchIcon />
      </IconButton>
    </Toolbar>
    <Bookmarks>
      {BOOKMARKS.map(([Icon, label]) => (
        <Bookmark key={label} href="#">
          <Icon />
          {label}
        </Bookmark>
      ))}
      <OtherBookmarks href="#">
        <FolderIcon />
        Other bookmarks
      </OtherBookmarks>
    </Bookmarks>
  </>
)

const ReportSidebar = () => (
  <Sidebar>
    <SideNav>
      {NAV.map(({ label, group, open, spaced }) => (
        <SideItem key={label} $group={group} $spaced={spaced}>
          <a href="#">
            {group && (open ? <Caret color="#222" size={7} /> : <CaretRight />)}
            {label}
          </a>
        </SideItem>
      ))}
    </SideNav>
    {['Advertising', 'Traffic Sources', 'Content', 'Conversions'].map((label) => (
      <Accordion key={label}>
        {label}
        <Caret color="#b5b5b5" />
      </Accordion>
    ))}
    <AccordionEnd />
    <Help>
      <HelpTitle>
        <h2>Help</h2>
        <IconButton aria-label="Collapse help">
          <svg width="9" height="9" viewBox="0 0 9 9">
            <rect x=".5" y=".5" width="8" height="8" rx="1" fill="#f3efe6" stroke="#7898b5" />
            <path d="M2 4.500h5" stroke="#000" />
          </svg>
        </IconButton>
      </HelpTitle>
      <HelpLinks>
        <TextLink $tall href="#">The Location Report</TextLink>
        <TextLink $tall href="#">Viewing Metrics</TextLink>
      </HelpLinks>
      <HelpSearch>
        <TextLink href="#">Help Centre</TextLink>
        <div>
          <input aria-label="Search Help Centre" defaultValue="Search Help Centre" />
          <button type="button">Go</button>
        </div>
      </HelpSearch>
    </Help>
  </Sidebar>
)

const DataTable = () => (
  <Table>
    <colgroup>
      <col width="40" />
      <col />
      <col width="136" />
      <col width="136" />
      <col width="136" />
      <col width="136" />
      <col width="136" />
    </colgroup>
    <thead>
      <tr>
        <th />
        <NameHead>Country/Territory</NameHead>
        <SortedHead>
          <span>
            <span>Visits</span>
            <SortArrow />
          </span>
        </SortedHead>
        <th>Pages/Visit</th>
        <th>Avg. Time on Site</th>
        <th>% New Visits</th>
        <th>Bounce Rate</th>
      </tr>
    </thead>
    <tbody>
      {ROWS.map(([name, visits, ...rest], i) => (
        <tr key={name}>
          <td>{i + 1}.</td>
          <NameCell>
            <a href="#">{name}</a>
          </NameCell>
          <SortedCell $odd={i % 2 === 0}>{visits}</SortedCell>
          {rest.map((value, n) => (
            <td key={n}>{value}</td>
          ))}
        </tr>
      ))}
    </tbody>
  </Table>
)

const App = () => (
  <Window>
    <GlobalStyle />
    <BrowserChrome />
    <Page>
      <ReportSidebar />
      <Main>
        <ReportTabs>
          <ReportTab $active href="#">
            Site Usage
            <svg width="10" height="6" viewBox="0 0 10 6">
              <path d="M0 6l5-5 5 5" fill="#fff" stroke="#aaa" />
            </svg>
          </ReportTab>
          <ReportTab href="#">E-commerce</ReportTab>
        </ReportTabs>
        <Cards>
          {METRICS.map(({ name, value, note, bold, active }) => (
            <Card key={name} $active={active}>
              <CardName>
                {name}
                <HelpMark aria-label={`About ${name}`}>?</HelpMark>
              </CardName>
              <CardValue $active={active}>
                {active && <Dot />}
                {value}
              </CardValue>
              <CardNote>
                {note}
                <b>{bold}</b>
              </CardNote>
              {active && (
                <CardNotch width="18" height="9" viewBox="0 0 18 9">
                  <path d="M0 9l9-8.500L18 9" fill="#fff" stroke="#aaa" />
                </CardNotch>
              )}
            </Card>
          ))}
        </Cards>
        <MapPanel>
          <WorldMap />
          <Legend>
            <h3>Visits</h3>
            <div>
              1
              <Scale>
                {SCALE.map(([from, to]) => (
                  <Swatch key={from} $from={from} $to={to} />
                ))}
              </Scale>
              45
            </div>
          </Legend>
        </MapPanel>
        <Report>
          <Viewing>
            <span>Viewing:</span>
            <ViewingLink $active href="#">
              Country/Territory
              <svg width="12" height="6" viewBox="0 0 12 6">
                <path d="M0 6l6-6 6 6z" fill="#666" />
              </svg>
            </ViewingLink>
            <ViewingLink href="#">City</ViewingLink>
            <ViewingLink href="#">Continent</ViewingLink>
            <ViewingLink href="#">Subcontinent Region</ViewingLink>
          </Viewing>
          <Filters>
            <label htmlFor="dimension">Secondary dimension:</label>
            <SelectBox>
              <select id="dimension">
                <option>Select...</option>
              </select>
              <Caret />
            </SelectBox>
            <TableSearch>
              <input aria-label="Filter rows" />
              <button type="button" aria-label="Search">
                <SearchIcon />
              </button>
            </TableSearch>
            <Advanced href="#">advanced</Advanced>
            <span>View:</span>
            <ViewButton aria-label="Table view">
              <GridIcon />
              <Caret />
            </ViewButton>
            <span>1 - 3 of 3</span>
            <Pager>
              <button aria-label="Previous page">
                <Chevron d="M5 0L2 4l3 4" />
              </button>
              <button aria-label="Next page">
                <Chevron d="M1 0l3 4-3 4" />
              </button>
            </Pager>
          </Filters>
          <DataTable />
        </Report>
      </Main>
      <Scrollbar>
        <ScrollButton aria-label="Scroll up">
          <svg width="8" height="4" viewBox="0 0 8 4">
            <path d="M0 4l4-4 4 4z" fill="currentColor" />
          </svg>
        </ScrollButton>
        <Track $grow={168} />
        <Thumb>
          <svg width="8" height="8" viewBox="0 0 8 8">
            <path d="M0 1h8M0 4h8M0 7h8" stroke="#3f7fa8" />
          </svg>
        </Thumb>
        <Track $grow={52} />
        <ScrollButton aria-label="Scroll down">
          <Caret color="#444" />
        </ScrollButton>
      </Scrollbar>
    </Page>
    <StatusEdge />
  </Window>
)

export default App
